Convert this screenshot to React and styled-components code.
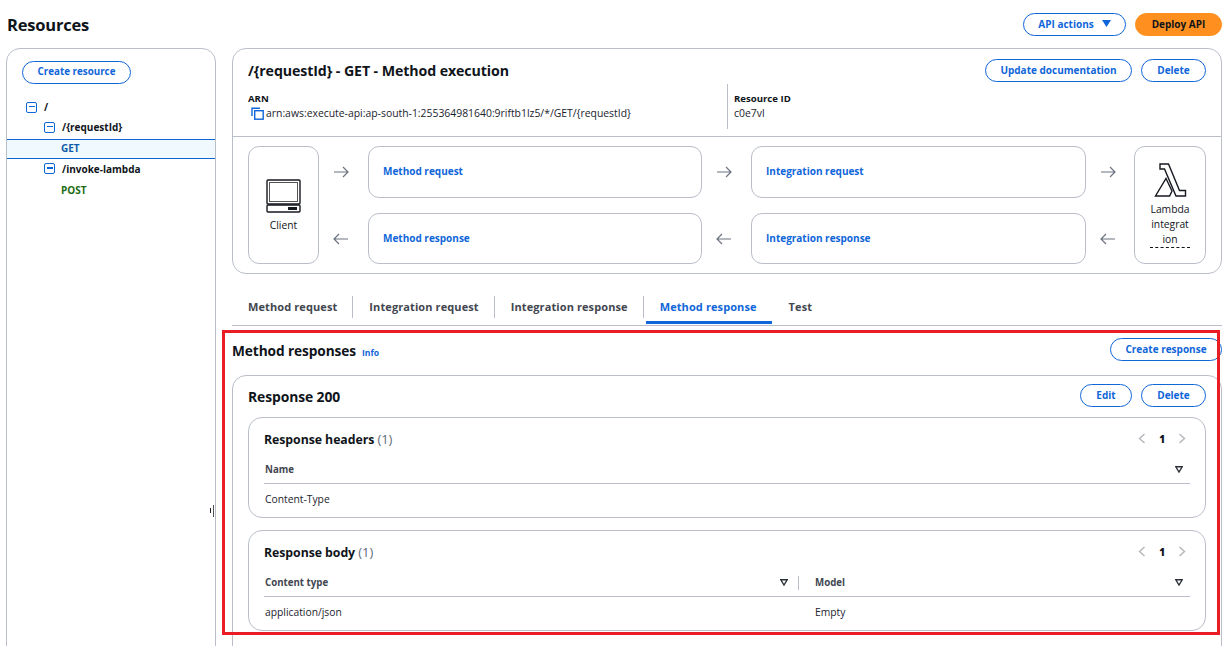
import React from 'react';
import styled, { createGlobalStyle } from 'styled-components';

const blue = '#0f66d9';
const ink = '#0f141a';
const line = '#b9bec9';

const Global = createGlobalStyle`
  html, body { margin: 0; padding: 0; background: #fff; overflow: hidden; }
  body { font-family: "Open Sans", "Noto Sans", Arial, sans-serif; color: ${ink}; }
  * { box-sizing: border-box; }
`;

const Page = styled.div`
  width: 1224px;
  height: 646px;
  overflow: hidden;
  padding: 13px 2px 0 6px;
`;

const TopBar = styled.header`
  display: flex;
  align-items: center;
  justify-content: space-between;
  height: 23px;
  margin-bottom: 12px;
`;

const PageTitle = styled.h1`
  margin: 0 0 0 1px;
  font-size: 16.5px;
  line-height: 23px;
  font-weight: 700;
  letter-spacing: -0.2px;
`;

const ButtonRow = styled.div`
  display: flex;
  gap: ${({ $gap }) => $gap || 9}px;
`;

const Button = styled.button`
  height: 23px;
  width: ${({ $w }) => $w}px;
  padding: 0 0 2px;
  display: flex;
  align-items: center;
  justify-content: center;
  gap: 8px;
  border-radius: 12px;
  border: 1px solid ${({ $primary }) => ($primary ? '#ff9020' : blue)};
  background: ${({ $primary }) => ($primary ? '#ff9020' : '#fff')};
  color: ${({ $primary }) => ($primary ? ink : blue)};
  font: 700 10px/1 "Open Sans", sans-serif;
`;

const Columns = styled.div`
  display: flex;
  gap: 16px;
  align-items: flex-start;
`;

const Sidebar = styled.aside`
  position: relative;
  width: 210px;
  height: 640px;
  flex: none;
  border: 1px solid ${line};
  border-radius: 14px;
  padding: 12px 0 0;
`;

const CreateResource = styled(Button)`
  margin-left: 15px;
  margin-bottom: 14px;
  font-size: 9.8px;
`;

const TreeRow = styled.div`
  display: flex;
  align-items: center;
  gap: 7px;
  height: ${({ $h }) => $h || 21}px;
  padding-left: ${({ $indent }) => $indent}px;
  padding-bottom: ${({ $pb }) => $pb || 2}px;
  font-size: 10px;
  font-weight: 700;
  color: ${({ $color }) => $color || ink};
  background: ${({ $selected }) => ($selected ? '#f0fafe' : 'transparent')};
  box-shadow: ${({ $selected }) => ($selected ? `inset 0 1px 0 ${blue}, inset 0 -1px 0 ${blue}` : 'none')};
`;

const Toggle = styled.span`
  position: relative;
  width: 11px;
  height: 11px;
  flex: none;
  border: 1.5px solid ${blue};
  border-radius: 2px;
  &::after {
    content: '';
    position: absolute;
    left: 1.5px;
    right: 1.5px;
    top: 3px;
    height: 1.5px;
    background: ${blue};
  }
`;

const ResizeHandle = styled.span`
  position: absolute;
  right: 1px;
  top: 456px;
  width: 4px;
  height: 12px;
  border-right: 1px solid #555;
  &::before {
    content: '';
    position: absolute;
    left: 0;
    top: 3px;
    height: 5px;
    width: 1px;
    background: #222;
  }
`;

const Main = styled.main`
  flex: 1;
  min-width: 0;
`;

const Card = styled.section`
  border: 1px solid ${line};
  border-radius: 14px;
  background: #fff;
`;

const ExecCard = styled(Card)`
  height: 226px;
`;

const ExecHead = styled.div`
  height: 88px;
  padding: 10px 15px 0;
  border-bottom: 1px solid ${line};
`;

const HeadRow = styled.div`
  display: flex;
  align-items: center;
  justify-content: space-between;
`;

const ExecTitle = styled.h2`
  margin: 0;
  font-size: 14.2px;
  font-weight: 700;
  line-height: 23px;
  letter-spacing: -0.1px;
`;

const Meta = styled.div`
  display: grid;
  grid-template-columns: 479px 1fr;
  margin-top: 2px;
`;

const MetaCell = styled.div`
  height: 45px;
  padding-top: 7px;
  padding-left: ${({ $divided }) => ($divided ? '6px' : '0')};
  border-left: ${({ $divided }) => ($divided ? `1px solid ${line}` : 'none')};
`;

const MetaLabel = styled.div`
  font-size: 9.6px;
  font-weight: 700;
  line-height: 15px;
`;

const MetaValue = styled.div`
  display: flex;
  align-items: center;
  gap: 2px;
  font-size: 10.4px;
  line-height: 15px;
  color: #1b232d;
  svg { margin-left: 3px; }
`;

const Flow = styled.div`
  display: grid;
  grid-template-columns: 71px 49px 334px 49px 335px 48px 72px;
  grid-template-rows: 52px 51px;
  row-gap: 15px;
  padding: 9px 15px 0;
`;

const EndBox = styled.div`
  grid-row: 1 / 3;
  grid-column: ${({ $col }) => $col};
  border: 1px solid ${line};
  border-radius: 11px;
  display: flex;
  flex-direction: column;
  align-items: center;
  text-align: center;
  font-size: 10.3px;
  line-height: 15px;
  padding-top: ${({ $top }) => $top}px;
`;

const StepBox = styled.div`
  display: flex;
  align-items: center;
  padding: 0 0 2px 14px;
  border: 1px solid ${line};
  border-radius: 11px;
  color: ${blue};
  font-size: 10px;
  font-weight: 700;
`;

const ArrowCell = styled.div`
  display: flex;
  align-items: center;
  justify-content: center;
  padding-right: 5px;
  color: #6b7280;
`;

const ClientLabel = styled.span`
  margin-top: 5px;
`;

const BrokenLabel = styled.span`
  display: block;
  width: 40px;
  margin-top: 4px;
  word-break: break-all;
  border-bottom: 1px dashed ${ink};
`;

const Tabs = styled.nav`
  display: flex;
  align-items: flex-start;
  height: 52px;
  padding-top: 22px;
  border-bottom: 1px solid ${line};
`;

const Tab = styled.div`
  position: relative;
  height: 22px;
  display: flex;
  align-items: center;
  padding: 0 15px 2px 16px;
  font-size: 11px;
  letter-spacing: 0.1px;
  font-weight: 700;
  color: ${({ $active }) => ($active ? blue : '#424650')};
  border-right: 1px solid ${({ $last, $active }) => ($last || $active ? 'transparent' : line)};
  &::after {
    content: '';
    display: ${({ $active }) => ($active ? 'block' : 'none')};
    position: absolute;
    left: 2px;
    right: 0;
    bottom: -6px;
    height: 3px;
    background: ${blue};
  }
`;

const Responses = styled.section`
  position: relative;
  padding-top: 12px;
`;

const Highlight = styled.div`
  position: absolute;
  left: -10px;
  top: 4px;
  width: 998px;
  height: 305px;
  border: 3px solid #ea1c24;
  pointer-events: none;
`;

const SectionTitle = styled.h2`
  margin: 0;
  height: 23px;
  font-size: 13.7px;
  font-weight: 700;
  line-height: 25px;
  letter-spacing: -0.1px;
  display: flex;
  align-items: baseline;
  gap: 6px;
`;

const InfoLink = styled.span`
  font-size: 8.6px;
  font-weight: 700;
  letter-spacing: 0;
  color: ${blue};
`;

const ResponseCard = styled(Card)`
  margin-top: 14px;
  height: 300px;
  padding: 8px 15px;
`;

const ResponseTitle = styled.h3`
  margin: 0;
  height: 23px;
  font-size: 13.9px;
  font-weight: 700;
  line-height: 25px;
  letter-spacing: -0.1px;
`;

const SubCard = styled(Card)`
  height: 101px;
  margin-top: ${({ $gap }) => $gap}px;
  padding: 10px 15px 0;
`;

const SubHead = styled.div`
  display: flex;
  align-items: center;
  justify-content: space-between;
  height: 21px;
  padding-right: 4px;
`;

const SubTitle = styled.h4`
  margin: 0;
  font-size: 12.3px;
  font-weight: 700;
  letter-spacing: -0.05px;
  span {
    font-size: 13px;
    font-weight: 400;
    color: #5f6b7a;
  }
`;

const Pager = styled.div`
  display: flex;
  align-items: center;
  gap: 13px;
  font-size: 10px;
  font-weight: 700;
  b { color: ${ink}; }
`;

const Table = styled.div`
  margin-top: 10px;
`;

const TableHead = styled.div`
  display: grid;
  grid-template-columns: ${({ $cols }) => $cols};
  height: 25px;
  padding-bottom: 3px;
  align-items: center;
  border-bottom: 1px solid ${line};
`;

const TableRow = styled.div`
  display: grid;
  grid-template-columns: ${({ $cols }) => $cols};
  height: 29px;
  align-items: center;
  padding-left: 1px;
  font-size: 10.3px;
  color: #1b232d;
`;

const HeadCell = styled.div`
  display: flex;
  align-items: center;
  justify-content: space-between;
  height: 14px;
  padding: 0 7px 0 ${({ $first }) => ($first ? 1 : 16)}px;
  border-left: ${({ $first }) => ($first ? 'none' : `1px solid ${line}`)};
  font-size: 9.7px;
  font-weight: 700;
  color: #424650;
  &:not(:last-child) { padding-right: 10px; }
`;

const BodyCell = styled.div`
  padding-left: ${({ $first }) => ($first ? 0 : 16)}px;
`;

const Arrow = ({ left }) => (
  <svg width="16" height="12" viewBox="0 0 16 12" fill="none" stroke="currentColor" strokeWidth="1.2">
    {left ? <path d="M15 6H1M6 1 1 6l5 5" /> : <path d="M1 6h14M10 1l5 5-5 5" />}
  </svg>
);

const CopyIcon = () => (
  <svg width="13" height="13" viewBox="0 0 13 13" fill="none" stroke={blue} strokeWidth="1.4">
    <path d="M1 9V1.2h8" />
    <rect x="3.7" y="3.7" width="8.5" height="8.5" />
  </svg>
);

const LaptopIcon = () => (
  <svg width="35" height="34" viewBox="0 0 35 34" fill="none" stroke="#16191f">
    <rect x="1" y="1" width="33" height="24" rx="1" strokeWidth="1.4" />
    <rect x="3.5" y="3.5" width="28" height="19" fill="none" strokeWidth="1" stroke="#555" />
    <rect x="1" y="26" width="33" height="7" rx="1" strokeWidth="1.4" />
    <rect x="22" y="28" width="9" height="3" fill="#16191f" stroke="none" />
  </svg>
);

const LambdaIcon = () => (
  <svg width="33" height="35" viewBox="0 0 33 35" fill="none" stroke="#16191f" strokeWidth="1.4" strokeLinejoin="miter">
    <path d="M6 1h8.5l11 26.5H31.5V33H22L10.5 6H6z" />
    <path d="M12 15.5 18 28l-2.4 5H1.5z" />
  </svg>
);

const Caret = () => (
  <svg width="9" height="7" viewBox="0 0 9 7">
    <path d="M0 0h9L4.5 7z" fill="currentColor" />
  </svg>
);

const SortIcon = () => (
  <svg width="8" height="7" viewBox="0 0 8 7" fill="none" stroke="#2b3039" strokeWidth="1.4">
    <path d="M.8.8h6.4L4 6z" />
  </svg>
);

const Chevron = ({ right }) => (
  <svg width="8" height="11" viewBox="0 0 8 11" fill="none" stroke="#b4b4bb" strokeWidth="1.4">
    {right ? <path d="M1.5 1 6.5 5.5l-5 4.5" /> : <path d="M6.5 1 1.5 5.5l5 4.5" />}
  </svg>
);

const SubSection = ({ title, gap, cols, headers, cells }) => (
  <SubCard $gap={gap}>
    <SubHead>
      <SubTitle>{title} <span>(1)</span></SubTitle>
      <Pager>
        <Chevron />
        <b>1</b>
        <Chevron right />
      </Pager>
    </SubHead>
    <Table>
      <TableHead $cols={cols}>
        {headers.map((h, i) => (
          <HeadCell key={h} $first={i === 0}>
            {h}
            <SortIcon />
          </HeadCell>
        ))}
      </TableHead>
      <TableRow $cols={cols}>
        {cells.map((c, i) => (
          <BodyCell key={c} $first={i === 0}>{c}</BodyCell>
        ))}
      </TableRow>
    </Table>
  </SubCard>
);

export default function App() {
  return (
    <Page>
      <Global />
      <TopBar>
        <PageTitle>Resources</PageTitle>
        <ButtonRow>
          <Button $w={103}>API actions <Caret /></Button>
          <Button $w={87} $primary>Deploy API</Button>
        </ButtonRow>
      </TopBar>
      <Columns>
        <Sidebar>
          <CreateResource $w={109}>Create resource</CreateResource>
          <TreeRow $indent={19} $h={20}><Toggle />/</TreeRow>
          <TreeRow $indent={37} $pb={3}><Toggle />/{'{requestId}'}</TreeRow>
          <TreeRow $indent={54} $h={20} $selected $color="#0f5aa8">GET</TreeRow>
          <TreeRow $indent={37}><Toggle />/invoke-lambda</TreeRow>
          <TreeRow $indent={54} $color="#1d6b12">POST</TreeRow>
          <ResizeHandle />
        </Sidebar>
        <Main>
          <ExecCard>
            <ExecHead>
              <HeadRow>
                <ExecTitle>/{'{requestId}'} - GET - Method execution</ExecTitle>
                <ButtonRow>
                  <Button $w={147}>Update documentation</Button>
                  <Button $w={65}>Delete</Button>
                </ButtonRow>
              </HeadRow>
              <Meta>
                <MetaCell>
                  <MetaLabel>ARN</MetaLabel>
                  <MetaValue>
                    <CopyIcon />
                    arn:aws:execute-api:ap-south-1:255364981640:9riftb1lz5/*/GET/{'{requestId}'}
                  </MetaValue>
                </MetaCell>
                <MetaCell $divided>
                  <MetaLabel>Resource ID</MetaLabel>
                  <MetaValue>c0e7vl</MetaValue>
                </MetaCell>
              </Meta>
            </ExecHead>
            <Flow>
              <EndBox $col={1} $top={32}>
                <LaptopIcon />
                <ClientLabel>Client</ClientLabel>
              </EndBox>
              <ArrowCell><Arrow /></ArrowCell>
              <StepBox>Method request</StepBox>
              <ArrowCell><Arrow /></ArrowCell>
              <StepBox>Integration request</StepBox>
              <ArrowCell><Arrow /></ArrowCell>
              <EndBox $col={7} $top={16}>
                <LambdaIcon />
                <BrokenLabel>Lambda integration</BrokenLabel>
              </EndBox>
              <ArrowCell><Arrow left /></ArrowCell>
              <StepBox>Method response</StepBox>
              <ArrowCell><Arrow left /></ArrowCell>
              <StepBox>Integration response</StepBox>
              <ArrowCell><Arrow left /></ArrowCell>
            </Flow>
          </ExecCard>
          <Tabs>
            <Tab>Method request</Tab>
            <Tab>Integration request</Tab>
            <Tab>Integration response</Tab>
            <Tab $active>Method response</Tab>
            <Tab $last>Test</Tab>
          </Tabs>
          <Responses>
            <HeadRow>
              <SectionTitle>Method responses <InfoLink>Info</InfoLink></SectionTitle>
              <Button $w={112}>Create response</Button>
            </HeadRow>
            <ResponseCard>
              <HeadRow>
                <ResponseTitle>Response 200</ResponseTitle>
                <ButtonRow>
                  <Button $w={52}>Edit</Button>
                  <Button $w={65}>Delete</Button>
                </ButtonRow>
              </HeadRow>
              <SubSection
                gap={10}
                title="Response headers"
                cols="1fr"
                headers={['Name']}
                cells={['Content-Type']}
              />
              <SubSection
                gap={12}
                title="Response body"
                cols="534px 1fr"
                headers={['Content type', 'Model']}
                cells={['application/json', 'Empty']}
              />
            </ResponseCard>
            <Highlight />
          </Responses>
        </Main>
      </Columns>
    </Page>
  );
}
